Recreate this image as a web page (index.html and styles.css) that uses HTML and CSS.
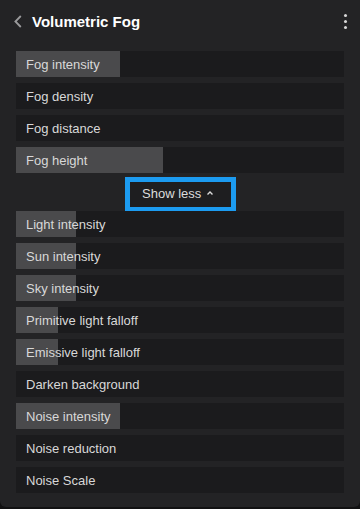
FILE: index.html
```html
<!DOCTYPE html>
<html>
<head>
<meta charset="utf-8">
<link rel="stylesheet" href="styles.css">
</head>
<body>
<div class="panel">
  <div class="header">
    <svg class="back" width="8" height="13" viewBox="0 0 8 13"><polyline points="6.8,1 1.4,6.5 6.8,12" fill="none" stroke="#9a9a9c" stroke-width="1.8"/></svg>
    <div class="title">Volumetric Fog</div>
    <div class="menu"><span></span><span></span><span></span></div>
  </div>
  <div class="list">
    <div class="group">
      <div class="row"><div class="fill" style="width:104px"></div><span class="label">Fog intensity</span></div>
      <div class="row"><span class="label">Fog density</span></div>
      <div class="row"><span class="label">Fog distance</span></div>
      <div class="row"><div class="fill" style="width:147px"></div><span class="label">Fog height</span></div>
    </div>
    <div class="toggle-wrap">
      <button class="toggle">Show less <svg width="8" height="6" viewBox="0 0 8 6"><polyline points="1.5,4.5 4,2 6.5,4.5" fill="none" stroke="#dcdcdc" stroke-width="1.4"/></svg></button>
    </div>
    <div class="group second">
      <div class="row"><div class="fill" style="width:60px"></div><span class="label">Light intensity</span></div>
      <div class="row"><div class="fill" style="width:60px"></div><span class="label">Sun intensity</span></div>
      <div class="row"><div class="fill" style="width:60px"></div><span class="label">Sky intensity</span></div>
      <div class="row"><div class="fill" style="width:42px"></div><span class="label">Primitive light falloff</span></div>
      <div class="row"><div class="fill" style="width:42px"></div><span class="label">Emissive light falloff</span></div>
      <div class="row"><span class="label">Darken background</span></div>
      <div class="row"><div class="fill" style="width:104px"></div><span class="label">Noise intensity</span></div>
      <div class="row"><span class="label">Noise reduction</span></div>
      <div class="row"><span class="label">Noise Scale</span></div>
    </div>
  </div>
</div>
</body>
</html>
```
FILE: styles.css
```css
html, body {
  margin: 0;
  padding: 0;
  background: #111112;
}
.panel {
  width: 360px;
  height: 507px;
  background: #232325;
  border-radius: 0 0 6px 6px;
  font-family: "Liberation Sans", Arial, sans-serif;
  overflow: hidden;
}
.header {
  height: 43px;
  display: flex;
  align-items: center;
  padding: 0 0 0 14px;
  position: relative;
}
.back {
  display: block;
  margin-right: 10px;
}
.title {
  color: #ffffff;
  font-size: 15px;
  font-weight: bold;
  flex: 1;
}
.menu {
  position: absolute;
  left: 344px;
  top: 14px;
  display: flex;
  flex-direction: column;
  gap: 3px;
}
.menu span {
  width: 3px;
  height: 3px;
  border-radius: 50%;
  background: #d8d8d8;
}
.list {
  padding: 8px 16px 0 16px;
  display: flex;
  flex-direction: column;
}
.group {
  display: flex;
  flex-direction: column;
  gap: 6px;
}
.group.second {
  margin-top: -1px;
}
.row {
  position: relative;
  height: 26px;
  background: #1b1b1d;
}
.fill {
  position: absolute;
  left: 0;
  top: 0;
  bottom: 0;
  background: #4a4a4c;
}
.label {
  position: relative;
  display: block;
  padding-left: 10px;
  padding-top: 1px;
  line-height: 26px;
  font-size: 13px;
  color: #d8d8d8;
}
.toggle-wrap {
  display: flex;
  justify-content: center;
  margin-top: 4px;
}
.toggle {
  box-sizing: border-box;
  width: 111px;
  height: 35px;
  border: 5px solid #1c9bf0;
  background: #1e1e20;
  color: #dcdcdc;
  font-family: "Liberation Sans", Arial, sans-serif;
  font-size: 13px;
  padding: 0 0 3px 12px;
  margin-left: 1px;
  display: flex;
  align-items: center;
  justify-content: flex-start;
  gap: 5px;
}
.toggle svg {
  display: block;
  margin-top: 0px;
}
```
